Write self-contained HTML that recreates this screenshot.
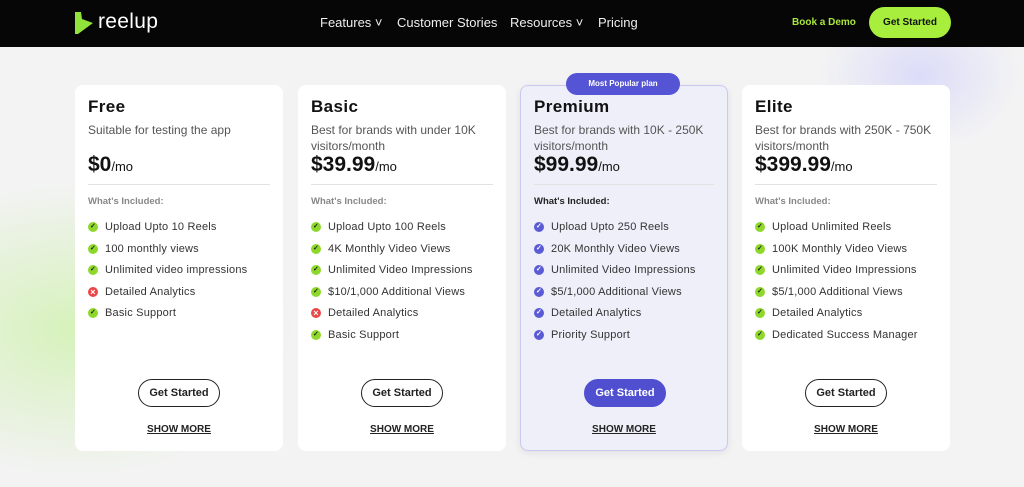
<!DOCTYPE html><html style="width:1024px;height:487px;overflow:hidden"><head><style>
*{margin:0;padding:0;box-sizing:border-box}
body{width:1024px;height:487px;overflow:hidden;font-family:"Liberation Sans",sans-serif;background:#f3f3f4;position:relative}
.bg1{position:absolute;left:-150px;top:180px;width:450px;height:300px;border-radius:50%;background:radial-gradient(closest-side,rgba(190,240,140,.55),rgba(190,240,140,0));}
.bg2{position:absolute;left:820px;top:0px;width:200px;height:150px;border-radius:50%;background:radial-gradient(closest-side,rgba(210,210,250,.7),rgba(210,210,250,0));}
nav{position:absolute;top:0;left:0;width:1024px;height:47px;background:#060606;color:#fff}
.logo{position:absolute;left:98px;top:10px;font-size:21px;letter-spacing:.3px}
.menu{position:absolute;top:15px;font-size:13px;color:#eee}
.demo{position:absolute;left:792px;top:17px;font-size:10px;font-weight:bold;color:#a8e63c}
.gs{position:absolute;left:869px;top:7px;width:82px;height:31px;border-radius:16px;background:#a8ee3c;color:#111;font-size:10px;font-weight:bold;text-align:center;line-height:31px}
.card{position:absolute;top:85px;width:208px;height:366px;background:#fff;border-radius:8px}
.card.p{background:#efeffa;border:1px solid #c9c9f0;box-shadow:0 2px 8px rgba(0,0,0,.08)}
.card.p>*{margin-top:-1px}
.t{position:absolute;left:13px;top:12px;font-size:17px;font-weight:bold;color:#111;letter-spacing:.4px}
.d{position:absolute;left:13px;top:37px;font-size:12px;color:#555;line-height:16px;width:185px}
.pr{position:absolute;left:13px;font-size:21px;font-weight:bold;color:#111}
.pr span{font-size:13px;font-weight:normal}
.hr{position:absolute;left:13px;right:13px;top:99px;border-top:1px solid #e2e2e2}
.wi{position:absolute;left:13px;top:111px;font-size:9.5px;color:#888;font-weight:bold}
ul{position:absolute;left:13px;top:135px;list-style:none}
li{height:21.6px;font-size:11px;color:#333;position:relative;padding-left:17px;line-height:14px;letter-spacing:.2px}
li:before{content:"✓";position:absolute;left:0;top:2px;width:10px;height:10px;border-radius:50%;background:#8ed82c;color:#222;font-size:7px;line-height:10px;text-align:center;font-weight:bold}
li.x:before{content:"×";background:#e94848;color:#fff;font-size:9px}
.p li:before{background:#5b5bd6;color:#fff}
.btn{position:absolute;left:63px;top:294px;width:82px;height:28px;border:1px solid #222;border-radius:14px;font-size:11px;font-weight:bold;text-align:center;line-height:26px;color:#222;background:#fff}
.p .btn{background:#4f4fd0;border-color:#4f4fd0;color:#fff}
.sm{position:absolute;left:0;width:100%;top:339px;text-align:center;font-size:10px;font-weight:bold;color:#222;text-decoration:underline}
.badge{position:absolute;left:566px;top:73px;width:114px;height:22px;border-radius:11px;background:#5454d4;color:#fff;font-size:8px;font-weight:bold;text-align:center;line-height:22px}
</style></head><body>
<div class="bg1"></div><div class="bg2"></div>
<nav>
<svg style="position:absolute;left:73px;top:11px" width="22" height="24" viewBox="0 0 22 24"><path d="M2 1 L8 1 L9 8 L20 12 L5 23 L2 23 Z" fill="#8fe33b"/></svg>
<div class="logo">reelup</div>
<div class="menu" style="left:320px">Features ˅</div>
<div class="menu" style="left:397px">Customer Stories</div>
<div class="menu" style="left:510px">Resources ˅</div>
<div class="menu" style="left:598px">Pricing</div>
<div class="demo">Book a Demo</div>
<div class="gs">Get Started</div>
</nav>
<div class="card" style="left:75px"><div class="t">Free</div><div class="d">Suitable for testing the app</div><div class="pr" style="top:68px">$0<span>/mo</span></div><div class="hr"></div><div class="wi">What's Included:</div>
<ul><li>Upload Upto 10 Reels</li><li>100 monthly views</li><li>Unlimited video impressions</li><li class="x">Detailed Analytics</li><li>Basic Support</li></ul><div class="btn">Get Started</div><div class="sm">SHOW MORE</div></div>
<div class="card" style="left:298px"><div class="t">Basic</div><div class="d">Best for brands with under 10K visitors/month</div><div class="pr" style="top:68px">$39.99<span>/mo</span></div><div class="hr"></div><div class="wi">What's Included:</div>
<ul><li>Upload Upto 100 Reels</li><li>4K Monthly Video Views</li><li>Unlimited Video Impressions</li><li>$10/1,000 Additional Views</li><li class="x">Detailed Analytics</li><li>Basic Support</li></ul><div class="btn">Get Started</div><div class="sm">SHOW MORE</div></div>
<div class="card p" style="left:520px"><div class="t">Premium</div><div class="d">Best for brands with 10K - 250K visitors/month</div><div class="pr" style="top:68px">$99.99<span>/mo</span></div><div class="hr"></div><div class="wi" style="color:#222">What's Included:</div>
<ul><li>Upload Upto 250 Reels</li><li>20K Monthly Video Views</li><li>Unlimited Video Impressions</li><li>$5/1,000 Additional Views</li><li>Detailed Analytics</li><li>Priority Support</li></ul><div class="btn">Get Started</div><div class="sm">SHOW MORE</div></div>
<div class="card" style="left:742px"><div class="t">Elite</div><div class="d">Best for brands with 250K - 750K visitors/month</div><div class="pr" style="top:68px">$399.99<span>/mo</span></div><div class="hr"></div><div class="wi">What's Included:</div>
<ul><li>Upload Unlimited Reels</li><li>100K Monthly Video Views</li><li>Unlimited Video Impressions</li><li>$5/1,000 Additional Views</li><li>Detailed Analytics</li><li>Dedicated Success Manager</li></ul><div class="btn">Get Started</div><div class="sm">SHOW MORE</div></div>
<div class="badge">Most Popular plan</div>
</body></html>
